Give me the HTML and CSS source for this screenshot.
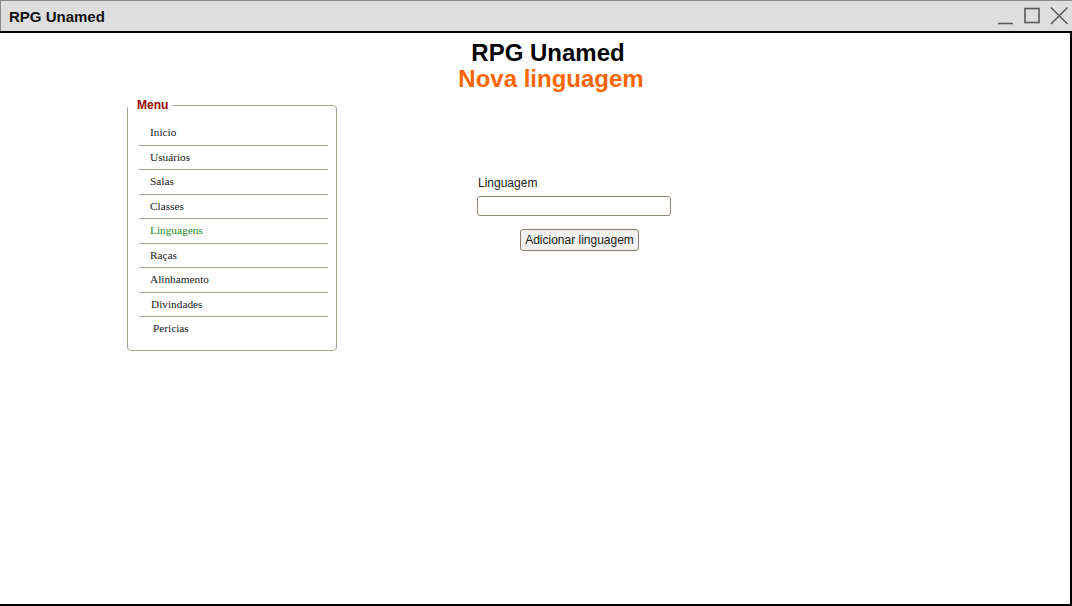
FILE: index.html
```html
<!DOCTYPE html>
<html lang="pt">
<head>
<meta charset="utf-8">
<title>RPG Unamed</title>
<link rel="stylesheet" href="styles.css">
</head>
<body>
<div class="window">
  <div class="titlebar">
    <span class="title">RPG Unamed</span>
    <div class="controls">
      <svg class="ctl" width="18" height="18" viewBox="0 0 18 18"><path d="M1 16.5H16" stroke="#5a5a5a" stroke-width="1.6" fill="none"/></svg>
      <svg class="ctl" width="18" height="18" viewBox="0 0 18 18"><rect x="2" y="1.5" width="14" height="14" stroke="#5a5a5a" stroke-width="1.6" fill="none"/></svg>
      <svg class="ctl" width="20" height="20" viewBox="0 0 20 20"><path d="M2 1.5L18.5 18M18.5 1.5L2 18" stroke="#5a5a5a" stroke-width="1.6" fill="none"/></svg>
    </div>
  </div>
  <div class="content">
    <header class="page-head">
      <h1>RPG Unamed</h1>
      <h2>Nova linguagem</h2>
    </header>
    <div class="main">
      <fieldset class="menu">
        <legend>Menu</legend>
        <ul>
          <li>Inicio</li>
          <li>Usuários</li>
          <li>Salas</li>
          <li>Classes</li>
          <li class="active">Linguagens</li>
          <li>Raças</li>
          <li>Alinhamento</li>
          <li class="shift1">Divindades</li>
          <li class="shift2">Pericias</li>
        </ul>
      </fieldset>
      <form class="form">
        <label class="label" for="lang">Linguagem</label>
        <input id="lang" class="input" type="text">
        <button type="button" class="btn">Adicionar linguagem</button>
      </form>
    </div>
  </div>
</div>
</body>
</html>
```
FILE: styles.css
```css
* { box-sizing: border-box; }
html, body { margin: 0; padding: 0; }
body {
  width: 1072px;
  height: 606px;
  overflow: hidden;
  font-family: "Liberation Sans", Arial, sans-serif;
  background: #fff;
}
.window {
  display: flex;
  flex-direction: column;
  width: 1072px;
  height: 606px;
}
.titlebar {
  height: 31px;
  background: #dedede;
  border-top: 1px solid #8a8a8a;
  border-left: 1px solid #8a8a8a;
  display: flex;
  align-items: center;
  justify-content: space-between;
  padding-left: 8px;
  padding-right: 3px;
}
.title {
  font-weight: bold;
  font-size: 15px;
  color: #111;
  margin-top: 1px;
}
.controls {
  display: flex;
  align-items: center;
  gap: 8px;
}
.content {
  flex: 1;
  border-top: 2px solid #000;
  border-right: 2px solid #000;
  border-bottom: 2px solid #000;
  display: flex;
  flex-direction: column;
}
.page-head {
  text-align: center;
  padding-left: 26px;
  padding-top: 7px;
}
.page-head h1 {
  margin: 0;
  font-size: 24px;
  line-height: 26px;
  color: #000;
}
.page-head h2 {
  margin: 0;
  padding-left: 6px;
  font-size: 24px;
  line-height: 26px;
  color: #ff6600;
}
.main {
  display: flex;
  align-items: flex-start;
  padding-left: 127px;
  margin-top: 7px;
}
.menu {
  width: 210px;
  margin: 0;
  padding: 11px 8px 8px 11px;
  border: 1px solid #a8a595;
  border-radius: 4px;
}
.menu legend {
  font-size: 12px;
  font-weight: bold;
  color: #990000;
  padding: 0 4px 0 9px;
  margin-left: -11px;
  line-height: 12px;
}
.menu ul {
  list-style: none;
  margin: 0;
  padding: 0;
}
.menu li {
  height: 24.57px;
  border-bottom: 1px solid #a8a595;
  font-family: "Liberation Serif", "Times New Roman", serif;
  font-size: 11.3px;
  color: #222;
  padding-left: 11px;
  padding-top: 5px;
}
.menu li:first-child { height: 23.5px; padding-top: 4px; }
.menu li.active { color: #1e8a1e; }
.menu li.shift1 { padding-left: 12px; }
.menu li.shift2 {
  border-bottom: none;
  margin-left: 2px;
  padding-left: 12px;
}
.form {
  display: flex;
  flex-direction: column;
  align-items: flex-start;
  margin-left: 140px;
  margin-top: 77px;
}
.label {
  font-size: 12px;
  color: #222;
  margin-left: 1px;
  line-height: 14px;
}
.input {
  width: 194px;
  height: 20px;
  margin-top: 6px;
  border: 1px solid #968b7d;
  border-radius: 3px;
  background: #fff;
  outline: none;
}
.btn {
  align-self: flex-start;
  margin-left: 43px;
  margin-top: 13px;
  height: 22px;
  width: 119px;
  padding: 0 2px;
  font-family: "Liberation Sans", Arial, sans-serif;
  font-size: 12px;
  color: #222;
  background: #f1f1f1;
  border: 1px solid #8a7f70;
  border-radius: 3px;
  white-space: nowrap;
  overflow: hidden;
}
```
